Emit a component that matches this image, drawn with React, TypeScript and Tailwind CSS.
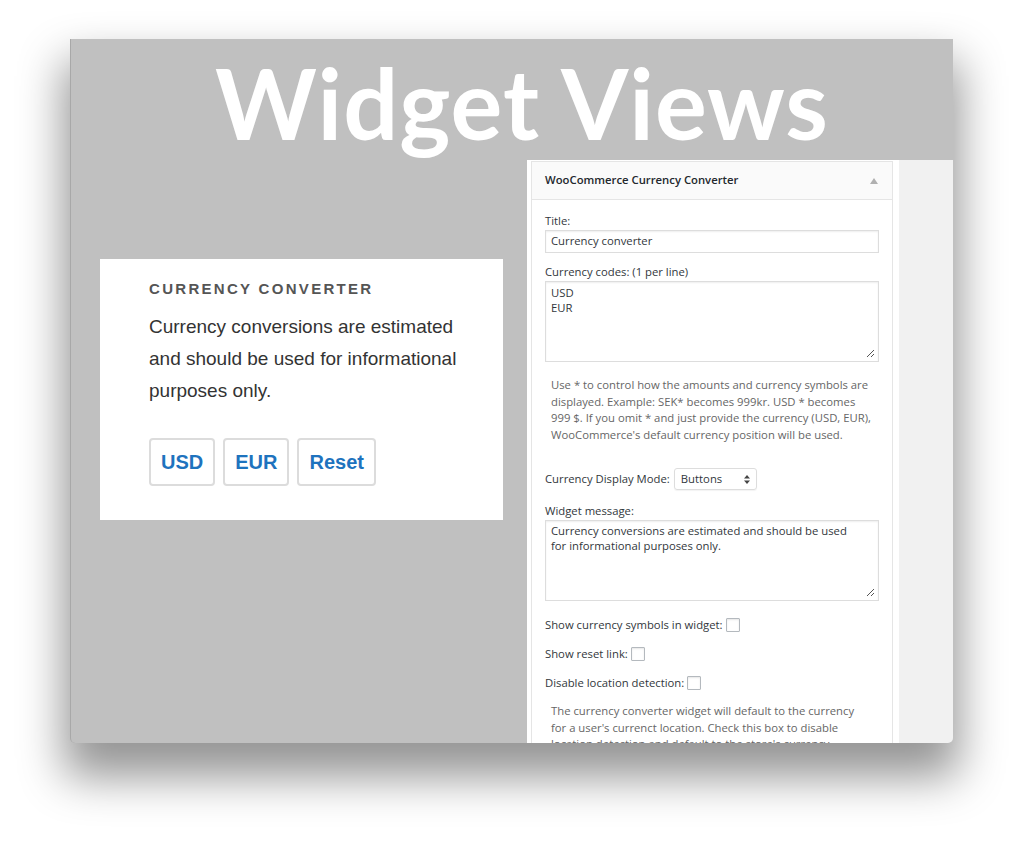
import React from "react";

const Grip = () => (
  <svg width="9" height="9" viewBox="0 0 9 9" className="absolute right-[3px] bottom-[3px]">
    <line x1="8" y1="1" x2="1" y2="8" stroke="#555" strokeWidth="1" />
    <line x1="8" y1="5" x2="5" y2="8" stroke="#555" strokeWidth="1" />
  </svg>
);

const Checkbox = () => (
  <span className="inline-block w-[14px] h-[14px] border border-[#b4b9be] bg-white rounded-[1px] shadow-[inset_0_1px_2px_rgba(0,0,0,0.1)] ml-[3px]" />
);

export default function App() {
  return (
    <div className="w-[1024px] h-[844px] bg-white overflow-hidden pt-[39px] pl-[70px]">
      <div className="w-[883px] h-[704px] bg-[#c0c0c0] rounded-b-[5px] overflow-hidden flex flex-col shadow-[0_28px_45px_6px_rgba(0,0,0,0.42)] border-l border-[#a8a8a8]">
        {/* header */}
        <div className="h-[121px] shrink-0 flex items-start justify-center">
          <div
            className="text-white font-bold text-[97px] leading-none mt-[15px] ml-[20px] tracking-[1px]"
            style={{ fontFamily: "Lato, 'Open Sans', sans-serif" }}
          >
            Widget Views
          </div>
        </div>
        {/* body */}
        <div className="flex flex-1 min-h-0">
          {/* left preview */}
          <div className="w-[456px] shrink-0 pl-[29px] pt-[99px]">
            <div
              className="w-[403px] h-[261px] bg-white pl-[49px] pt-[20px]"
              style={{ fontFamily: "'Liberation Sans', Arial, sans-serif" }}
            >
              <div className="text-[15px] leading-[20px] font-bold tracking-[2.3px] text-[#555]">
                CURRENCY CONVERTER
              </div>
              <div className="mt-[12px] text-[19px] leading-[32px] text-[#333] w-[335px]">
                Currency conversions are estimated and should be used for informational purposes only.
              </div>
              <div className="mt-[31px] flex gap-[8px]">
                {["USD", "EUR", "Reset"].map((t) => (
                  <div
                    key={t}
                    className="h-[48px] px-[10px] flex items-center border-2 border-[#dcdcdc] rounded-[4px] text-[20px] font-bold text-[#1e73be]"
                  >
                    {t}
                  </div>
                ))}
              </div>
            </div>
          </div>
          {/* right admin column */}
          <div className="w-[372px] shrink-0 bg-white pl-[4px] pr-[6px] pt-[1px] overflow-hidden">
            <div
              className="border border-[#e5e5e5] bg-white h-[600px]"
              style={{ fontFamily: "'Open Sans', sans-serif" }}
            >
              <div className="h-[38px] bg-[#fafafa] border-b border-[#e5e5e5] flex items-center justify-between pl-[13px] pr-[14px]">
                <span className="text-[11.3px] font-semibold text-[#23282d]">WooCommerce Currency Converter</span>
                <svg width="8" height="6" viewBox="0 0 8 6">
                  <polygon points="4,0 8,6 0,6" fill="#b0b0b0" />
                </svg>
              </div>
              <div className="px-[13px] pt-[12px] text-[11.3px] text-[#32373c]">
                <div className="leading-[18px]">Title:</div>
                <div className="h-[23px] border border-[#dddddd] shadow-[inset_0_1px_2px_rgba(0,0,0,0.07)] flex items-center px-[5px] text-[#32373c]">
                  Currency converter
                </div>
                <div className="leading-[18px] mt-[10px]">Currency codes: (1 per line)</div>
                <div className="relative h-[81px] border border-[#dddddd] shadow-[inset_0_1px_2px_rgba(0,0,0,0.07)] px-[5px] pt-[3px] leading-[15px]">
                  <div>USD</div>
                  <div>EUR</div>
                  <Grip />
                </div>
                <p className="mt-[15px] pl-[6px] pr-[4px] leading-[16.5px] text-[#666]">
                  Use * to control how the amounts and currency symbols are displayed. Example: SEK* becomes 999kr. USD * becomes 999 $. If you omit * and just provide the currency (USD, EUR), WooCommerce's default currency position will be used.
                </p>
                <div className="mt-[25px] flex items-center">
                  <span>Currency Display Mode:</span>
                  <div className="ml-[4px] w-[83px] h-[22px] border border-[#dddddd] rounded-[3px] flex items-center justify-between pl-[6px] pr-[6px] shadow-[0_1px_1px_rgba(0,0,0,0.05)]">
                    <span>Buttons</span>
                    <svg width="6" height="9" viewBox="0 0 6 9">
                      <polygon points="3,0 6,3.5 0,3.5" fill="#444" />
                      <polygon points="0,5.5 6,5.5 3,9" fill="#444" />
                    </svg>
                  </div>
                </div>
                <div className="leading-[18px] mt-[12px]">Widget message:</div>
                <div className="relative h-[81px] border border-[#dddddd] shadow-[inset_0_1px_2px_rgba(0,0,0,0.07)] pl-[5px] pr-[16px] pt-[2px] leading-[15px]">
                  Currency conversions are estimated and should be used for informational purposes only.
                  <Grip />
                </div>
                <div className="mt-[15px] h-[18px] flex items-center">
                  Show currency symbols in widget:<Checkbox />
                </div>
                <div className="mt-[11px] h-[18px] flex items-center">
                  Show reset link:<Checkbox />
                </div>
                <div className="mt-[11px] h-[18px] flex items-center">
                  Disable location detection:<Checkbox />
                </div>
                <p className="mt-[11px] pl-[6px] pr-[20px] leading-[16.5px] text-[#666]">
                  The currency converter widget will default to the currency for a user's currenct location. Check this box to disable location detection and default to the store's currency.
                </p>
              </div>
            </div>
          </div>
          <div className="flex-1 bg-[#f1f1f1]" />
        </div>
      </div>
    </div>
  );
}
